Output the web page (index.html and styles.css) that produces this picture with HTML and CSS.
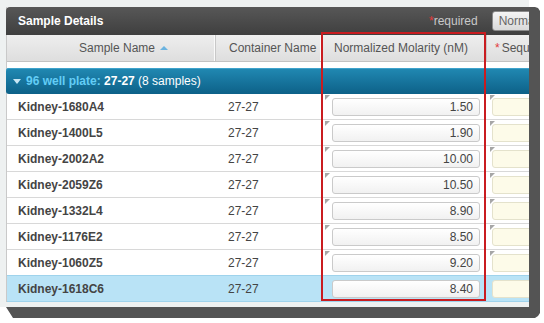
FILE: index.html
```html
<!DOCTYPE html>
<html>
<head>
<meta charset="utf-8">
<link rel="stylesheet" href="styles.css">
</head>
<body>
<div class="frame">
  <div class="shot">
    <div class="panel">
      <div class="titlebar">
        <span class="title">Sample Details</span>
        <span class="req"><span class="star">*</span>required</span>
        <span class="btn">Normalize</span>
      </div>
      <div class="colhead">
        <div class="ch c1">Sample Name <span class="sort"></span></div>
        <div class="ch c2">Container Name</div>
        <div class="ch c3">Normalized Molarity (nM)</div>
        <div class="ch c4"><span class="star">*</span> Sequencing Index</div>
      </div>
      <div class="gap"></div>
      <div class="group"><span class="caret"></span><span class="gtext"><span class="gl">96 well plate:</span> <b>27-27</b> (8 samples)</span></div>
      <div class="row dirty"><div class="name">Kidney-1680A4</div><div class="cont">27-27</div><div class="mol"><span class="inp">1.50</span></div><div class="seq"><span class="yinp"></span></div></div>
      <div class="row dirty"><div class="name">Kidney-1400L5</div><div class="cont">27-27</div><div class="mol"><span class="inp">1.90</span></div><div class="seq"><span class="yinp"></span></div></div>
      <div class="row dirty"><div class="name">Kidney-2002A2</div><div class="cont">27-27</div><div class="mol"><span class="inp">10.00</span></div><div class="seq"><span class="yinp"></span></div></div>
      <div class="row dirty"><div class="name">Kidney-2059Z6</div><div class="cont">27-27</div><div class="mol"><span class="inp">10.50</span></div><div class="seq"><span class="yinp"></span></div></div>
      <div class="row dirty"><div class="name">Kidney-1332L4</div><div class="cont">27-27</div><div class="mol"><span class="inp">8.90</span></div><div class="seq"><span class="yinp"></span></div></div>
      <div class="row dirty"><div class="name">Kidney-1176E2</div><div class="cont">27-27</div><div class="mol"><span class="inp">8.50</span></div><div class="seq"><span class="yinp"></span></div></div>
      <div class="row dirty"><div class="name">Kidney-1060Z5</div><div class="cont">27-27</div><div class="mol"><span class="inp">9.20</span></div><div class="seq"><span class="yinp"></span></div></div>
      <div class="row sel"><div class="name">Kidney-1618C6</div><div class="cont">27-27</div><div class="mol"><span class="inp">8.40</span></div><div class="seq"><span class="yinp"></span></div></div>
    </div>
    <div class="highlight"></div>
  </div>
</div>
</body>
</html>
```

FILE: styles.css
```css
html, body {
  margin: 0;
  padding: 0;
  background: #fff;
}
body {
  font-family: "Liberation Sans", Arial, sans-serif;
  font-size: 12px;
  color: #444;
}
.frame {
  width: 540px;
  height: 318px;
  background: #545454;
  clip-path: polygon(0 0, 529px 0, 529px 7px, 535px 7px, 538px 8px, 540px 11px, 540px 313px, 538px 316px, 535px 318px, 13px 318px, 6px 307px, 0 307px);
}
.shot {
  position: relative;
  width: 529px;
  height: 307px;
  overflow: hidden;
  background: #eef1f1;
  padding: 7px 0 0 6px;
  box-sizing: border-box;
}
.panel {
  width: 640px;
  background: #fff;
  border-left: 1px solid #c9c9c9;
  box-sizing: border-box;
}
.titlebar {
  height: 28px;
  margin-left: -1px;
  background: linear-gradient(#575757, #3f3f3f);
  border-radius: 4px 4px 0 0;
  display: flex;
  align-items: center;
  padding-left: 12px;
}
.title {
  color: #fff;
  font-weight: bold;
  font-size: 12px;
  width: 411px;
}
.req {
  color: #c9c9c9;
  font-size: 12px;
}
.star {
  color: #e23b3b;
}
.btn {
  margin-left: 14px;
  height: 18px;
  line-height: 18px;
  padding: 0 6px;
  border: 1px solid #8a8a8a;
  border-radius: 3px;
  background: linear-gradient(#f4f4f4, #d9d9d9);
  color: #666;
  font-size: 12px;
}
.colhead {
  display: grid;
  grid-template-columns: 209px 106px 165px 1fr;
  height: 26px;
  background: linear-gradient(#eeeeee, #dedede);
  border-bottom: 1px solid #c2c2c2;
}
.ch {
  display: flex;
  align-items: center;
  color: #555;
  border-right: 1px solid #c8c8c8;
  box-shadow: inset -1px 0 0 #fafafa;
  white-space: nowrap;
  overflow: hidden;
}
.c1 { padding-left: 72px; }
.c2 { padding-left: 13px; }
.c3 { padding-left: 12px; }
.c4 { padding-left: 8px; border-right: none; box-shadow: none; }
.c4 .star { margin-right: 2px; }
.sort {
  display: inline-block;
  width: 0;
  height: 0;
  margin-left: 5px;
  border-left: 4px solid transparent;
  border-right: 4px solid transparent;
  border-bottom: 4px solid #6bb3e0;
}
.gap {
  height: 6px;
  background: #fff;
}
.group {
  height: 26px;
  margin-left: -1px;
  border-radius: 3px 0 0 3px;
  background: linear-gradient(#2189b3, #0d6188);
  box-shadow: inset 0 1px 0 #3ea3cc;
  color: #fff;
  display: flex;
  align-items: center;
  padding-left: 7px;
  font-size: 12px;
}
.gtext {
  white-space: pre;
}
.caret {
  width: 0;
  height: 0;
  border-left: 4px solid transparent;
  border-right: 4px solid transparent;
  border-top: 5px solid #c8e6f4;
  margin-right: 5px;
}
.gl {
  color: #63cdf6;
  font-weight: bold;
}
.group b { color: #fff; }
.row {
  display: grid;
  grid-template-columns: 209px 106px 165px 1fr;
  height: 25px;
  border-bottom: 1px solid #d8d8d8;
  align-items: center;
}
.name {
  padding-left: 11px;
  font-weight: bold;
  color: #444;
}
.cont {
  padding-left: 12px;
  color: #444;
}
.mol, .seq {
  position: relative;
  height: 100%;
  display: flex;
  align-items: center;
}
.mol { padding-left: 10px; }
.seq { padding-left: 5px; }
.dirty .mol::before, .dirty .seq::before {
  content: "";
  position: absolute;
  left: 3px;
  top: 1px;
  border-top: 5px solid #a6a6a6;
  border-right: 5px solid transparent;
}
.inp {
  box-sizing: border-box;
  width: 148px;
  height: 18px;
  border: 1px solid #cacaca;
  border-radius: 3px;
  background: linear-gradient(#ffffff, #f1f1f1);
  text-align: right;
  padding-right: 6px;
  line-height: 16px;
  color: #444;
}
.yinp {
  box-sizing: border-box;
  width: 100px;
  height: 18px;
  border: 1px solid #e4e2cc;
  border-radius: 3px;
  background: #fdfbe9;
}
.row.sel {
  background: #b9e3f6;
  border-top: 1px solid #9fd3ec;
  border-bottom: 1px solid #9fd3ec;
  margin-top: -1px;
}
.highlight {
  position: absolute;
  left: 321px;
  top: 32px;
  width: 165px;
  height: 269px;
  border: 2px solid #c91c20;
  box-sizing: border-box;
}
```
